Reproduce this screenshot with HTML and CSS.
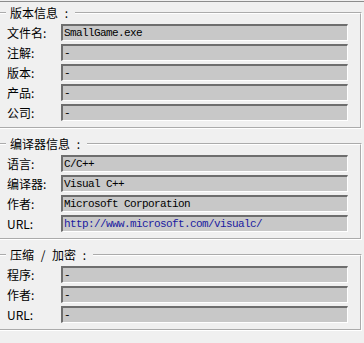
FILE: index.html
```html
<!DOCTYPE html>
<html lang="zh-CN">
<head>
    <meta charset="UTF-8">
    <title>文件信息</title>
    <link rel="stylesheet" href="styles.css">
</head>
<body>
    <div class="frame">
        <fieldset class="group">
            <legend>版本信息 :</legend>
            <div class="row"><label>文件名:</label><div class="field">SmallGame.exe</div></div>
            <div class="row"><label>注解:</label><div class="field">-</div></div>
            <div class="row"><label>版本:</label><div class="field">-</div></div>
            <div class="row"><label>产品:</label><div class="field">-</div></div>
            <div class="row"><label>公司:</label><div class="field">-</div></div>
        </fieldset>

        <fieldset class="group">
            <legend>编译器信息 :</legend>
            <div class="row"><label>语言:</label><div class="field">C/C++</div></div>
            <div class="row"><label>编译器:</label><div class="field">Visual C++</div></div>
            <div class="row"><label>作者:</label><div class="field">Microsoft Corporation</div></div>
            <div class="row"><label>URL:</label><div class="field link">http://www.microsoft.com/visualc/</div></div>
        </fieldset>

        <fieldset class="group">
            <legend>压缩 / 加密 :</legend>
            <div class="row"><label>程序:</label><div class="field">-</div></div>
            <div class="row"><label>作者:</label><div class="field">-</div></div>
            <div class="row"><label>URL:</label><div class="field">-</div></div>
        </fieldset>
    </div>
</body>
</html>
```

FILE: styles.css
```css
body {
    margin: 0;
    background-color: #f0f0f0;
    font-family: "Noto Sans CJK SC", "Liberation Sans", sans-serif;
    font-size: 12px;
    color: #000;
}
.frame {
    border-top: 1px solid #8c8c8c;
    margin-top: 1px;
    padding-top: 3px;
}
.group {
    margin: 0 0 7px 0;
    padding: 3px 12px 6px 7px;
    width: 362px;
    box-sizing: border-box;
    border: 2px groove #fff;
    border-left: none;
}
.group legend {
    padding: 0 7px 0 4px;
    margin-left: -1px;
    line-height: 16px;
    word-spacing: 4px;
}
.row {
    display: flex;
    align-items: center;
    height: 17px;
    margin-bottom: 3px;
}
.row:last-child {
    margin-bottom: 0;
}
.row label {
    width: 54px;
    flex: none;
    line-height: 17px;
}
.field {
    flex: 1;
    height: 17px;
    box-sizing: border-box;
    background-color: #c8c8c8;
    border-top: 2px solid #6e6e6e;
    border-left: 2px solid #6e6e6e;
    border-right: 1px solid #fff;
    border-bottom: 1px solid #fff;
    padding-left: 1px;
    font-family: "Liberation Mono", monospace;
    font-size: 11px;
    letter-spacing: -0.6px;
    line-height: 14px;
    white-space: nowrap;
}
.field.link {
    color: #1a1aa0;
}
```
